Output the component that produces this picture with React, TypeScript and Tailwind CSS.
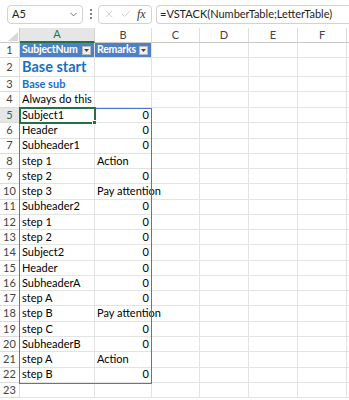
import { ChevronDown, Check, X } from "lucide-react"

type Row = { a?: string; b?: string; kind?: "title" | "sub" }

const rows: Row[] = [
  {},
  { a: "Base start", kind: "title" },
  { a: "Base sub", kind: "sub" },
  { a: "Always do this" },
  { a: "Subject1", b: "0" },
  { a: "Header", b: "0" },
  { a: "Subheader1", b: "0" },
  { a: "step 1", b: "Action" },
  { a: "step 2", b: "0" },
  { a: "step 3", b: "Pay attention" },
  { a: "Subheader2", b: "0" },
  { a: "step 1", b: "0" },
  { a: "step 2", b: "0" },
  { a: "Subject2", b: "0" },
  { a: "Header", b: "0" },
  { a: "SubheaderA", b: "0" },
  { a: "step A", b: "0" },
  { a: "step B", b: "Pay attention" },
  { a: "step C", b: "0" },
  { a: "SubheaderB", b: "0" },
  { a: "step A", b: "Action" },
  { a: "step B", b: "0" },
  {},
]

const heights = [
  "h-[15px]", "h-[19px]", "h-[15px]", "h-[16px]",
]

const cols = [
  { key: "C", w: "w-[48px]" },
  { key: "D", w: "w-[49px]" },
  { key: "E", w: "w-[49px]" },
  { key: "F", w: "w-[49px]" },
  { key: "", w: "w-[40px]" },
]

function FilterButton() {
  return (
    <span className="ml-auto mr-[3px] flex h-[9px] w-[9px] shrink-0 items-center justify-center border border-[#b9b9b9] bg-[#f0f0f0]">
      <svg width="5" height="3" viewBox="0 0 5 3">
        <path d="M0 0h5L2.5 3z" fill="#444" />
      </svg>
    </span>
  )
}

function SheetRow({ row, index }: { row: Row; index: number }) {
  const num = index + 1
  const h = heights[index] ?? "h-[15.28px]"
  const active = num === 5
  const isHeader = num === 1
  const isNumber = row.b === "0"

  return (
    <div className={`flex ${h}`}>
      <div
        className={`flex w-[20px] shrink-0 items-center justify-center border-b border-r text-[11px] ${
          active
            ? "border-b-[#dcdcdc] border-r-[#217346] bg-[#e6e6e6] text-[#217346]"
            : "border-[#dcdcdc] bg-white text-[#444]"
        }`}
      >
        {num}
      </div>

      {isHeader ? (
        <>
          <div className="flex w-[75px] shrink-0 items-center border-b border-r border-b-[#dcdcdc] border-r-[#e3e3e3] bg-[#4e80c6] pl-[2px] text-[10.5px] font-bold tracking-[-0.2px] text-white">
            SubjectNum
            <FilterButton />
          </div>
          <div className="flex w-[57px] shrink-0 items-center border-b border-r border-b-[#dcdcdc] border-r-[#e3e3e3] bg-[#4e80c6] pl-[2px] text-[10.5px] font-bold tracking-[-0.2px] text-white">
            Remarks
            <FilterButton />
          </div>
        </>
      ) : (
        <>
          <div
            className={`flex w-[75px] shrink-0 items-center whitespace-nowrap border-b border-r border-[#e3e3e3] pl-[2px] ${
              row.kind === "title"
                ? "text-[14.5px] font-bold text-[#1a6fc4]"
                : row.kind === "sub"
                  ? "text-[11px] font-bold text-[#1a6fc4]"
                  : "text-[11px] text-black"
            }`}
          >
            {row.a}
          </div>
          <div
            className={`relative z-10 flex w-[57px] shrink-0 items-center whitespace-nowrap border-b border-r border-[#e3e3e3] text-[11px] text-black ${
              isNumber ? "justify-end pr-[2px]" : "pl-[2px]"
            }`}
          >
            {row.b}
          </div>
        </>
      )}

      {cols.map((c, i) => (
        <div key={i} className={`${c.w} shrink-0 border-b border-r border-[#e3e3e3]`} />
      ))}
    </div>
  )
}

export default function App() {
  return (
    <div
      className="h-[400px] w-[349px] overflow-hidden bg-white"
      style={{ fontFamily: "Lato, 'Liberation Sans', sans-serif" }}
    >
      {/* formula bar */}
      <div className="flex h-[28px] items-center">
        <div className="ml-[7px] flex h-[19px] w-[76px] items-center rounded-[4px] border border-[#d2d2d2] pl-[4px] pr-[3px] text-[11px] text-[#222]">
          A5
          <ChevronDown className="ml-auto h-[11px] w-[11px] text-[#444]" strokeWidth={1.6} />
        </div>
        <div className="ml-[6px] flex w-[4px] flex-col items-center gap-[2px]">
          <span className="h-[2px] w-[2px] rounded-full bg-[#555]" />
          <span className="h-[2px] w-[2px] rounded-full bg-[#555]" />
          <span className="h-[2px] w-[2px] rounded-full bg-[#555]" />
        </div>
        <div className="ml-[5px] flex h-[19px] w-[54px] items-center gap-[5px] rounded-[4px] border border-[#d2d2d2] pl-[4px]">
          <X className="h-[12px] w-[12px] text-[#bdbdbd]" strokeWidth={1.3} />
          <Check className="h-[12px] w-[12px] text-[#bdbdbd]" strokeWidth={1.3} />
          <span
            className="text-[12px] italic text-[#333]"
            style={{ fontFamily: "'Liberation Serif', serif" }}
          >
            fx
          </span>
        </div>
        <div className="ml-[4px] flex h-[19px] flex-1 items-center rounded-l-[4px] border border-r-0 border-[#d2d2d2] pl-[3px] text-[11px] text-[#222]">
          =VSTACK(NumberTable;LetterTable)
        </div>
      </div>

      {/* grid */}
      <div className="relative">
        {/* column headers */}
        <div className="flex h-[15px]">
          <div className="relative w-[20px] shrink-0 border-b border-r border-[#c8c8c8] bg-white">
            <svg className="absolute bottom-[1px] right-[1px]" width="10" height="9" viewBox="0 0 10 9">
              <path d="M10 0V9H0z" fill="#d8d8d8" />
            </svg>
          </div>
          <div className="flex w-[75px] shrink-0 items-center justify-center border-b-2 border-r border-b-[#217346] border-r-[#d4d4d4] bg-[#e6e6e6] text-[11px] text-[#217346]">
            A
          </div>
          <div className="flex w-[57px] shrink-0 items-center justify-center border-b border-r border-b-[#c8c8c8] border-r-[#dcdcdc] text-[11px] text-[#444]">
            B
          </div>
          {cols.map((c, i) => (
            <div
              key={i}
              className={`flex ${c.w} shrink-0 items-center justify-center border-b border-r border-b-[#c8c8c8] border-r-[#dcdcdc] text-[11px] text-[#444]`}
            >
              {c.key}
            </div>
          ))}
        </div>

        {rows.map((r, i) => (
          <SheetRow key={i} row={r} index={i} />
        ))}

        {/* spill range outline */}
        <div className="pointer-events-none absolute left-[19px] top-[80px] z-20 h-[276px] w-[133px] border border-[#4a78c2]" />
        {/* active cell */}
        <div className="pointer-events-none absolute left-[19px] top-[79px] z-30 h-[17px] w-[77px] border-2 border-[#217346]" />
        <div className="pointer-events-none absolute left-[92px] top-[92px] z-30 h-[5px] w-[5px] border border-white bg-[#217346]" />
      </div>
    </div>
  )
}
